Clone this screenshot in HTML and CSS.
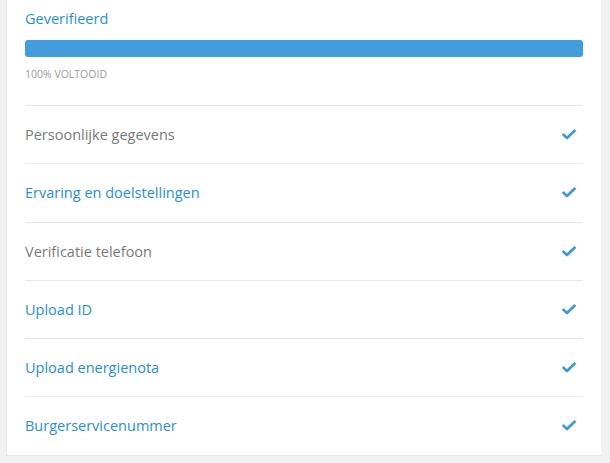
FILE: index.html
```html
<!DOCTYPE html>
<html>

<head>
    <title>Verificatie</title>
    <link rel="stylesheet" href="styles.css">
</head>
<body>
    <div class="card">
        <div class="progress-block">
            <h2 class="progress-title">Geverifieerd</h2>
            <div class="progress-bar">
                <div class="progress-fill" style="width: 100%"></div>
            </div>
            <p class="progress-label">100% VOLTOOID</p>
        </div>
        <ul class="steps">
            <li class="step">
                <span class="step-name">Persoonlijke gegevens</span>
                <svg class="check" viewBox="0 0 14 11"><path d="M1.5 5.8 L5 9 L12.5 1.8" /></svg>
            </li>
            <li class="step">
                <a class="step-name step-link" href="#">Ervaring en doelstellingen</a>
                <svg class="check" viewBox="0 0 14 11"><path d="M1.5 5.8 L5 9 L12.5 1.8" /></svg>
            </li>
            <li class="step">
                <span class="step-name">Verificatie telefoon</span>
                <svg class="check" viewBox="0 0 14 11"><path d="M1.5 5.8 L5 9 L12.5 1.8" /></svg>
            </li>
            <li class="step">
                <a class="step-name step-link" href="#">Upload ID</a>
                <svg class="check" viewBox="0 0 14 11"><path d="M1.5 5.8 L5 9 L12.5 1.8" /></svg>
            </li>
            <li class="step">
                <a class="step-name step-link" href="#">Upload energienota</a>
                <svg class="check" viewBox="0 0 14 11"><path d="M1.5 5.8 L5 9 L12.5 1.8" /></svg>
            </li>
            <li class="step">
                <a class="step-name step-link" href="#">Burgerservicenummer</a>
                <svg class="check" viewBox="0 0 14 11"><path d="M1.5 5.8 L5 9 L12.5 1.8" /></svg>
            </li>
        </ul>
    </div>
</body>

</html>
```

FILE: styles.css
```css
body {
    margin: 0;
    background-color: #f1f1f1;
    font-family: "Open Sans", Arial, sans-serif;
}

.card {
    margin: 0 9px 0 6px;
    padding: 0 18px;
    background-color: #ffffff;
    border-left: 1px solid #e6e6e6;
    border-bottom: 1px solid #e6e6e6;
}

.progress-block {
    padding: 9px 0 24px 0;
    border-bottom: 1px solid #e8e8e8;
}

.progress-title {
    margin: 0 0 11px 0;
    font-size: 14.5px;
    font-weight: normal;
    line-height: 20px;
    color: #2a8fcf;
}

.progress-bar {
    height: 17px;
    background-color: #e8e8e8;
    border-radius: 3px;
    overflow: hidden;
}

.progress-fill {
    height: 100%;
    background-color: #439ddc;
}

.progress-label {
    margin: 10px 0 0 0;
    font-size: 10.5px;
    line-height: 14px;
    color: #9a9a9a;
}

.steps {
    margin: 0;
    padding: 0;
    list-style: none;
}

.step {
    display: flex;
    justify-content: space-between;
    align-items: center;
    height: 57.25px;
    border-bottom: 1px solid #e8e8e8;
}

.step:last-child {
    border-bottom: none;
}

.step-name {
    font-size: 14.5px;
    color: #7a7a7a;
}

.step-link {
    color: #2a8fcf;
    text-decoration: none;
}

.check {
    width: 14px;
    height: 11px;
    margin-right: 7px;
}

.check path {
    fill: none;
    stroke: #3d98d8;
    stroke-width: 2.7;
    stroke-linecap: round;
    stroke-linejoin: round;
}
```
